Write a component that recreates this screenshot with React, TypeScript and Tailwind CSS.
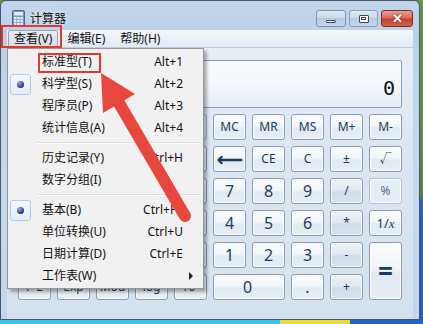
import React from "react";

const ui = "font-['Noto_Sans','Noto_Sans_CJK_SC',sans-serif]";

const keyBg =
  "bg-[linear-gradient(180deg,#fcfdfe_0%,#f1f5f9_46%,#e2e9f1_54%,#e9eef5_100%)]";
const opBg =
  "bg-[linear-gradient(180deg,#eef2f7_0%,#e3e9f1_46%,#d2dce8_54%,#dae2ec_100%)]";

type KeyProps = {
  label: React.ReactNode;
  kind?: "num" | "op" | "fn" | "dim" | "eq";
  className?: string;
};

const CalcKey: React.FC<KeyProps> = ({ label, kind = "fn", className = "" }) => {
  const bg = kind === "op" ? opBg : kind === "dim" ? "bg-[#e6edf5]" : keyBg;
  const border = kind === "dim" ? "border-[#b4c0cf]" : "border-[#8c9bb0]";
  const text =
    kind === "num"
      ? "text-[16px]"
      : kind === "eq"
        ? "text-[26px] font-bold"
        : "text-[12px]";
  const color = kind === "dim" ? "text-[#5b6f89]" : "text-[#1b3a60]";
  return (
    <div
      className={`flex items-center justify-center rounded-[3px] border leading-none shadow-[inset_0_0_0_1px_rgba(255,255,255,0.75)] ${bg} ${border} ${text} ${color} ${className}`}
    >
      {label}
    </div>
  );
};

type Item = {
  label: string;
  shortcut?: string;
  checked?: boolean;
  sub?: boolean;
};

const groups: Item[][] = [
  [
    { label: "标准型(T)", shortcut: "Alt+1" },
    { label: "科学型(S)", shortcut: "Alt+2", checked: true },
    { label: "程序员(P)", shortcut: "Alt+3" },
    { label: "统计信息(A)", shortcut: "Alt+4" },
  ],
  [
    { label: "历史记录(Y)", shortcut: "Ctrl+H" },
    { label: "数字分组(I)" },
  ],
  [
    { label: "基本(B)", shortcut: "Ctrl+F4", checked: true },
    { label: "单位转换(U)", shortcut: "Ctrl+U" },
    { label: "日期计算(D)", shortcut: "Ctrl+E" },
    { label: "工作表(W)", sub: true },
  ],
];

const MenuRow: React.FC<{ item: Item }> = ({ item }) => (
  <div className="relative flex h-[22px] items-center">
    {item.checked && (
      <div className="absolute left-[2px] top-[1px] flex h-[21px] w-[21px] items-center justify-center rounded-[3px] border border-[#aecbea] bg-[linear-gradient(180deg,#f3f8fd,#e3eefa)]">
        <div className="h-[7px] w-[7px] rounded-full bg-[radial-gradient(circle_at_35%_30%,#a6a6e6,#2b2c80_70%)]" />
      </div>
    )}
    <span className="ml-[34px] leading-none">{item.label}</span>
    {item.shortcut && (
      <span className="absolute right-[20px] leading-none">{item.shortcut}</span>
    )}
    {item.sub && (
      <span className="absolute right-[10px] top-[7px] h-0 w-0 border-y-[4px] border-l-[4px] border-y-transparent border-l-[#222]" />
    )}
  </div>
);

const TitleIcon = () => (
  <svg width="13" height="17" viewBox="0 0 13 17">
    <rect x="0.5" y="0.5" width="12" height="16" rx="1.5" fill="#7f99bd" stroke="#4e6a92" />
    <rect x="2" y="2" width="9" height="3.5" fill="#dceafa" />
    {[0, 1, 2].map((r) =>
      [0, 1, 2].map((c) => (
        <rect
          key={`${r}-${c}`}
          x={2 + c * 3.2}
          y={7 + r * 3}
          width="2.4"
          height="2.2"
          fill="#eef4fb"
        />
      )),
    )}
  </svg>
);

export default function App() {
  return (
    <div className={`relative h-[324px] w-[423px] overflow-hidden bg-[linear-gradient(180deg,#5f9b3a_0%,#4f8d3c_60%,#1f62c4_62%,#1d5fc2_100%)] ${ui}`}>
      <div className="flex h-[320px] w-[420px] flex-col rounded-t-[6px] border border-[#46576c] bg-[linear-gradient(180deg,#c2d6ec_0%,#bcd1e9_10%,#c7d9ee_60%,#c3d6eb_100%)]">
        {/* title bar */}
        <div className="flex h-[29px] items-start justify-between pl-[11px] pr-[6px] pt-[9px]">
          <div className="flex items-center gap-[5px]">
            <TitleIcon />
            <span className="text-[12px] leading-none text-[#111] [text-shadow:0_0_6px_rgba(255,255,255,0.9)]">
              计算器
            </span>
          </div>
          <div className="flex gap-[3px]">
            <div className="flex h-[17px] w-[30px] items-center justify-center rounded-[3px] border border-[#7d93b3] bg-[linear-gradient(180deg,#dfe9f5_0%,#c9d8ea_50%,#b6c9e0_50%,#c8d8ea_100%)]">
              <div className="mt-[5px] h-[3px] w-[10px] rounded-[1px] border border-[#3c4a5e] bg-white" />
            </div>
            <div className="flex h-[17px] w-[29px] items-center justify-center rounded-[3px] border border-[#8ba0bd] bg-[linear-gradient(180deg,#dfe9f5_0%,#c9d8ea_50%,#b6c9e0_50%,#c8d8ea_100%)]">
              <div className="flex h-[8px] w-[10px] items-center justify-center rounded-[1px] border border-[#3c4a5e] bg-white">
                <div className="h-[3px] w-[5px] border border-[#3c4a5e]" />
              </div>
            </div>
            <div className="flex h-[17px] w-[32px] items-center justify-center rounded-[3px] border border-[#7a2b22] bg-[linear-gradient(180deg,#e8a093_0%,#d76b5c_45%,#c6412f_55%,#d2624b_100%)]">
              <span className="text-[13px] font-bold leading-none text-white [text-shadow:0_0_2px_#4a1a14]">
                ✕
              </span>
            </div>
          </div>
        </div>

        {/* client area */}
        <div className="mx-[6px] flex flex-1 flex-col bg-[linear-gradient(180deg,#eaf0f7_0%,#dce6f2_40%,#d6e1ef_100%)]">
          {/* menu bar */}
          <div className="flex h-[18px] items-stretch gap-[3px] border-b border-[#c0ccda] bg-[linear-gradient(180deg,#f4f7fb,#e2eaf4)] pl-[1px] text-[12px] text-[#111]">
            <div className="flex items-center rounded-[2px] border border-[#9aa3ae] bg-[linear-gradient(180deg,#e9edf1,#d7dde4)] px-[5px] leading-none">
              查看(V)
            </div>
            <div className="flex items-center px-[6px] leading-none">编辑(E)</div>
            <div className="flex items-center px-[6px] leading-none">帮助(H)</div>
          </div>

          <div className="flex flex-col px-[11px] pt-[12px]">
            {/* display */}
            <div className="flex h-[48px] items-end justify-end rounded-[2px] border border-[#8c9db4] bg-[linear-gradient(180deg,#fbfcfe_0%,#f1f5fa_60%,#e6edf6_100%)] pb-[9px] pr-[6px]">
              <span className="font-['DejaVu_Sans_Mono',monospace] text-[20px] leading-none text-[#111]">
                0
              </span>
            </div>

            {/* keypad */}
            <div className="mt-[6px] grid grid-cols-[repeat(10,33px)] auto-rows-[26px] gap-[6px]">
              <div className="col-span-5 rounded-[3px] border border-[#a9b6c6]" />
              <CalcKey label="MC" />
              <CalcKey label="MR" />
              <CalcKey label="MS" />
              <CalcKey label="M+" />
              <CalcKey label="M-" />

              <div />
              <CalcKey label="Inv" />
              <CalcKey label="ln" />
              <CalcKey label="(" />
              <CalcKey label=")" />
              <CalcKey label={<span className="text-[18px] font-bold">⟵</span>} />
              <CalcKey label="CE" />
              <CalcKey label="C" />
              <CalcKey label="±" />
              <CalcKey label="√" />

              <CalcKey label="Int" />
              <CalcKey label="sinh" />
              <CalcKey label="sin" />
              <CalcKey label="x²" />
              <CalcKey label="n!" />
              <CalcKey label="7" kind="num" />
              <CalcKey label="8" kind="num" />
              <CalcKey label="9" kind="num" />
              <CalcKey label="/" kind="op" />
              <CalcKey label="%" kind="dim" />

              <CalcKey label="dms" />
              <CalcKey label="cosh" />
              <CalcKey label="cos" />
              <CalcKey label="xʸ" />
              <CalcKey label="ʸ√x" />
              <CalcKey label="4" kind="num" />
              <CalcKey label="5" kind="num" />
              <CalcKey label="6" kind="num" />
              <CalcKey label="*" kind="op" />
              <CalcKey
                label={
                  <span className="text-[13px]">
                    1/<span className="font-['Liberation_Serif',serif] italic">x</span>
                  </span>
                }
              />

              <CalcKey label="π" />
              <CalcKey label="tanh" />
              <CalcKey label="tan" />
              <CalcKey label="x³" />
              <CalcKey label="∛x" />
              <CalcKey label="1" kind="num" />
              <CalcKey label="2" kind="num" />
              <CalcKey label="3" kind="num" />
              <CalcKey label="-" kind="op" />
              <CalcKey label="=" kind="eq" className="row-span-2" />

              <CalcKey label="F-E" />
              <CalcKey label="Exp" />
              <CalcKey label="Mod" />
              <CalcKey label="log" />
              <CalcKey label="10ˣ" />
              <CalcKey label="0" kind="num" className="col-span-2 justify-start pl-[29px]" />
              <CalcKey label="." kind="num" />
              <CalcKey label="+" kind="op" />
            </div>
          </div>
        </div>
      </div>

      {/* desktop strip below the window */}
      <div className="flex h-[4px] w-[423px]">
        <div className="w-[280px] bg-[#36c6ea]" />
        <div className="w-[70px] bg-[#e8dc3a]" />
        <div className="flex-1 bg-[#2563c6]" />
      </div>

      {/* dropdown menu */}
      <div className="absolute left-[7px] top-[48px] h-[241px] w-[197px] border border-[#979797] bg-[#f1f1f1] pt-[2px] text-[12px] text-[#111] shadow-[3px_3px_3px_rgba(0,0,0,0.3)]">
        {groups.map((g, gi) => (
          <React.Fragment key={gi}>
            {gi > 0 && (
              <div className="flex h-[8px] items-center pl-[29px] pr-[3px]">
                <div className="h-[2px] w-full border-b border-t border-b-white border-t-[#e0e0e0]" />
              </div>
            )}
            {g.map((it) => (
              <MenuRow key={it.label} item={it} />
            ))}
          </React.Fragment>
        ))}
      </div>

      {/* red annotations */}
      <div className="absolute left-[1px] top-[25px] h-[23px] w-[61px] border-[2px] border-[#e2382f]" />
      <div className="absolute left-[38px] top-[53px] h-[20px] w-[63px] border-[2px] border-[#e2382f]" />
      <svg className="pointer-events-none absolute left-0 top-0" width="423" height="324">
        <line x1="119" y1="103" x2="185" y2="216" stroke="#e8473d" strokeWidth="12" strokeLinecap="round" />
        <polygon points="101,73 135,94 103,113" fill="#e8473d" />
      </svg>
    </div>
  );
}
